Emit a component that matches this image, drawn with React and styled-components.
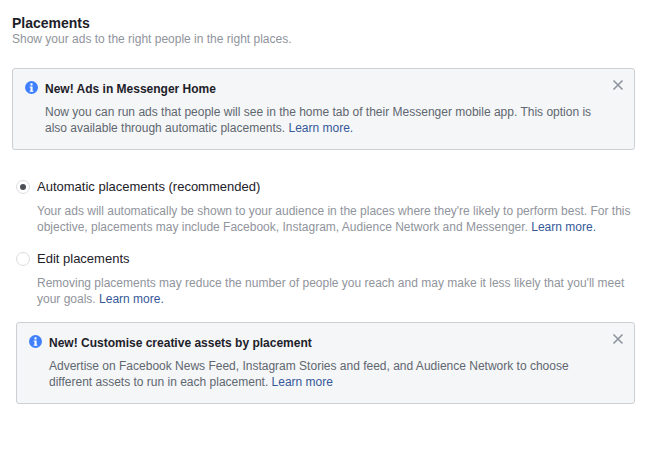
import React from 'react';
import styled, { createGlobalStyle } from 'styled-components';

const GlobalStyle = createGlobalStyle`
    html, body {
        margin: 0;
        background: #ffffff;
    }
    body {
        font-family: "Liberation Sans", Arial, sans-serif;
    }
`;

const Page = styled.div`
    width: 652px;
    height: 455px;
    box-sizing: border-box;
    padding: 15px 17px 0 12px;
    overflow: hidden;
`;

const Title = styled.h2`
    margin: 0;
    font-size: 14px;
    line-height: 17px;
    font-weight: bold;
    color: #1d2129;
`;

const Subtitle = styled.p`
    margin: 0 0 21px;
    font-size: 12px;
    line-height: 15px;
    color: #90949c;
`;

const Notice = styled.div`
    position: relative;
    display: flex;
    gap: 7px;
    box-sizing: border-box;
    height: 82px;
    margin-left: ${(p) => p.$indent || 0}px;
    padding: 12px 12px 0;
    background: #f5f6f7;
    border: 1px solid #ccd0d5;
    border-radius: 3px;
`;

const InfoIcon = styled.svg`
    flex: none;
    width: 13px;
    height: 13px;
`;

const NoticeTitle = styled.div`
    font-size: 12px;
    line-height: 16px;
    font-weight: bold;
    color: #1d2129;
    margin-bottom: 7px;
`;

const BodyText = styled.p`
    margin: 0;
    font-size: 12px;
    line-height: 16px;
    color: ${(p) => p.$color};
`;

const Link = styled.a`
    color: #365899;
`;

const CloseIcon = styled.svg`
    position: absolute;
    top: 10px;
    right: 10px;
    width: 12px;
    height: 12px;
`;

const Options = styled.div`
    display: flex;
    flex-direction: column;
    gap: 16px;
    margin: 29px 0 15px 4px;
`;

const Option = styled.div`
    display: grid;
    grid-template-columns: 14px 1fr;
    column-gap: 7px;
`;

const Radio = styled.span`
    display: flex;
    align-items: center;
    justify-content: center;
    box-sizing: border-box;
    width: 14px;
    height: 14px;
    margin-top: 1px;
    background: #ffffff;
    border: 1px solid #dadde1;
    border-radius: 50%;
    &::after {
        content: '';
        display: ${(p) => (p.$checked ? 'block' : 'none')};
        width: 6px;
        height: 6px;
        border-radius: 50%;
        background: #4b4f56;
    }
`;

const OptionLabel = styled.div`
    font-size: 13px;
    line-height: 16px;
    color: #1d2129;
    margin-bottom: 8px;
`;

const OptionBody = styled.div`
    grid-column: 2;
`;

const Info = () => (
    <InfoIcon viewBox="0 0 13 13">
        <circle cx="6.5" cy="6.5" r="6.5" fill="#4080ff" />
        <rect x="5.4" y="2.3" width="2.2" height="2.1" rx="0.6" fill="#ffffff" />
        <path d="M4.7 5.5h2.9v4.2h0.8v1.1H4.7V9.7h0.8V6.6h-0.8z" fill="#ffffff" />
    </InfoIcon>
);

const Close = () => (
    <CloseIcon viewBox="0 0 12 12">
        <path d="M1.5 1.5l9 9M10.5 1.5l-9 9" stroke="#8d949e" strokeWidth="1.6" fill="none" />
    </CloseIcon>
);

const App = () => (
    <Page>
        <GlobalStyle />
        <Title>Placements</Title>
        <Subtitle>Show your ads to the right people in the right places.</Subtitle>

        <Notice>
            <Info />
            <div>
                <NoticeTitle>New! Ads in Messenger Home</NoticeTitle>
                <BodyText $color="#606770">
                    Now you can run ads that people will see in the home tab of their Messenger mobile app. This option is
                    <br />
                    also available through automatic placements. <Link>Learn more.</Link>
                </BodyText>
            </div>
            <Close />
        </Notice>

        <Options>
            <Option>
                <Radio $checked />
                <OptionLabel>Automatic placements (recommended)</OptionLabel>
                <OptionBody>
                    <BodyText $color="#90949c">
                        Your ads will automatically be shown to your audience in the places where they're likely to perform best. For this
                        <br />
                        objective, placements may include Facebook, Instagram, Audience Network and Messenger. <Link>Learn more.</Link>
                    </BodyText>
                </OptionBody>
            </Option>
            <Option>
                <Radio />
                <OptionLabel>Edit placements</OptionLabel>
                <OptionBody>
                    <BodyText $color="#90949c">
                        Removing placements may reduce the number of people you reach and may make it less likely that you'll meet
                        <br />
                        your goals. <Link>Learn more.</Link>
                    </BodyText>
                </OptionBody>
            </Option>
        </Options>

        <Notice $indent={4}>
            <Info />
            <div>
                <NoticeTitle>New! Customise creative assets by placement</NoticeTitle>
                <BodyText $color="#606770">
                    Advertise on Facebook News Feed, Instagram Stories and feed, and Audience Network to choose
                    <br />
                    different assets to run in each placement. <Link>Learn more</Link>
                </BodyText>
            </div>
            <Close />
        </Notice>
    </Page>
);

export default App;
